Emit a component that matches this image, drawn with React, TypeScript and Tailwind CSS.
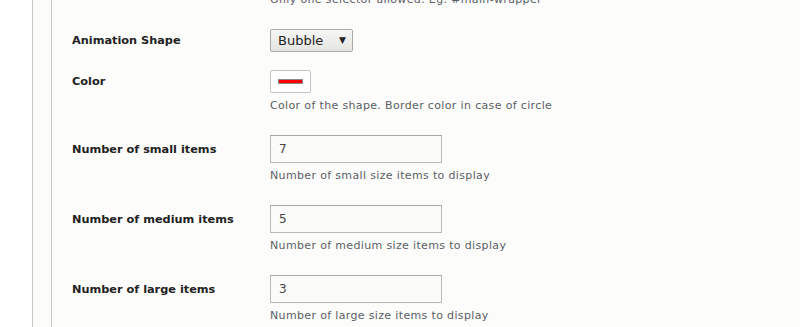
import React from 'react'

const labelFont = { fontFamily: '"DejaVu Sans", Verdana, sans-serif' }

function Description({ children }: { children: React.ReactNode }) {
    return (
        <div className="text-[11px] leading-[14px] text-[#5a5f66] tracking-[0.35px]" style={labelFont}>
            {children}
        </div>
    )
}

function NumberRow({ label, value, help }: { label: string; value: string; help: string }) {
    return (
        <div className="flex">
            <div className="w-[198px] pt-[8px] text-[11.3px] leading-[14px] font-bold text-[#222]" style={labelFont}>
                {label}
            </div>
            <div className="flex flex-col">
                <div className="w-[172px] h-[28px] border border-[#b8b8b8] border-t-[#a8a8a8] bg-[#fbfbfa] px-[8px] flex items-center text-[12px] text-[#444]" style={labelFont}>
                    {value}
                </div>
                <div className="mt-[6px]">
                    <Description>{help}</Description>
                </div>
            </div>
        </div>
    )
}

export default function App() {
    return (
        <div className="flex w-[800px] h-[327px] overflow-hidden bg-[#fcfcfa]">
            <div className="w-[32px] bg-white shrink-0" />
            <div className="w-[20px] shrink-0 border-l border-r border-[#c8c8c8]" />
            <div className="flex-1 pl-[20px]">
                <div className="flex">
                    <div className="w-[198px]" />
                    <div className="-mt-[7px]">
                        <Description>Only one selector allowed. Eg. #main-wrapper</Description>
                    </div>
                </div>

                <div className="flex mt-[22px]">
                    <div className="w-[198px] pt-[5px] text-[11.3px] leading-[14px] font-bold text-[#222]" style={labelFont}>
                        Animation Shape
                    </div>
                    <div className="w-[83px] h-[23px] border border-[#a9a9a9] rounded-[2px] bg-gradient-to-b from-[#f6f6f4] to-[#e4e4e1] flex items-center justify-between pl-[7px] pr-[6px] text-[13px] text-[#222]" style={labelFont}>
                        <span>Bubble</span>
                        <span className="text-[9px] text-[#222]">▼</span>
                    </div>
                </div>

                <div className="flex mt-[18px]">
                    <div className="w-[198px] pt-[5px] text-[11.3px] leading-[14px] font-bold text-[#222]" style={labelFont}>
                        Color
                    </div>
                    <div className="flex flex-col">
                        <div className="w-[41px] h-[23px] border border-[#c4c4c4] rounded-[2px] bg-white flex items-center justify-center">
                            <div className="w-[25px] h-[5px] bg-[#ff0000] border border-[#8a8a8a]" />
                        </div>
                        <div className="mt-[6px]">
                            <Description>Color of the shape. Border color in case of circle</Description>
                        </div>
                    </div>
                </div>

                <div className="mt-[22px] flex flex-col gap-[22px]">
                    <NumberRow label="Number of small items" value="7" help="Number of small size items to display" />
                    <NumberRow label="Number of medium items" value="5" help="Number of medium size items to display" />
                    <NumberRow label="Number of large items" value="3" help="Number of large size items to display" />
                </div>
            </div>
        </div>
    )
}
